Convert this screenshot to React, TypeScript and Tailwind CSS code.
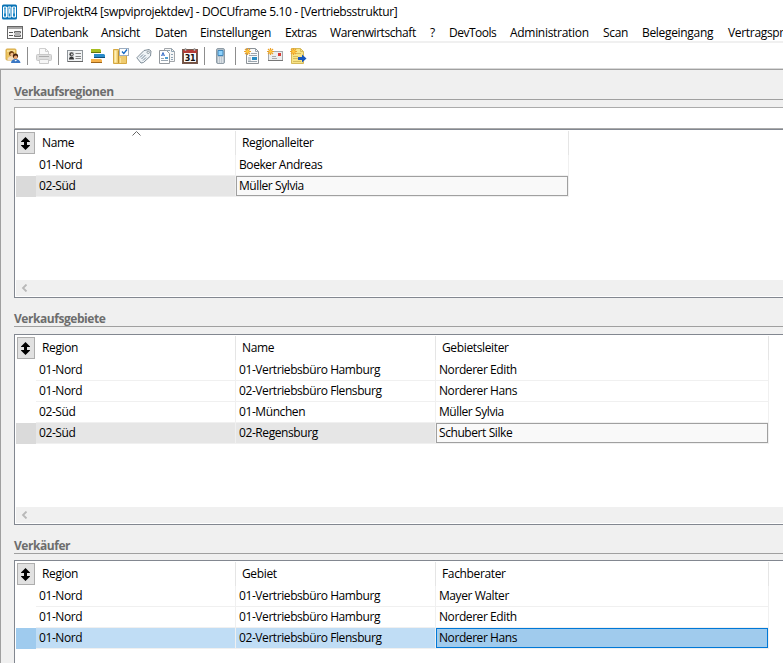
import React from "react";

interface Column {
  title: string;
  className: string;
  sorted?: boolean;
}

interface GridProps {
  columns: Column[];
  rows: string[][];
  active?: boolean;
  className: string;
  scrollbar?: boolean;
}

const menuItems = [
  { label: "Datenbank", className: "w-[71px] tracking-[-0.4px]" },
  { label: "Ansicht", className: "w-[54px] tracking-[-0.3px]" },
  { label: "Daten", className: "w-[45px] tracking-[-0.32px]" },
  { label: "Einstellungen", className: "w-[85px] tracking-[-0.32px]" },
  { label: "Extras", className: "w-[45px] tracking-[-0.5px]" },
  { label: "Warenwirtschaft", className: "w-[100px] tracking-[-0.42px]" },
  { label: "?", className: "w-[19px]" },
  { label: "DevTools", className: "w-[61px] tracking-[-0.5px]" },
  { label: "Administration", className: "w-[93px] tracking-[-0.3px]" },
  { label: "Scan", className: "w-[39px] tracking-[-0.32px]" },
  { label: "Belegeingang", className: "w-[86px] tracking-[-0.32px]" },
  { label: "Vertragsprüfung", className: "w-[100px] tracking-[-0.32px]" },
];

function AppIcon() {
  return (
    <svg className="h-4 w-[15px] shrink-0" viewBox="0 0 15 16">
      <rect width="15" height="15" y="0.5" rx="1.5" fill="#0873b6" />
      <path d="M1.500 3h3v10h-3zM6 3h3v10H6zM10.500 3h3v10h-3z" fill="#1b86c6" stroke="#fff" />
      <path d="M3 4.500v5M7.500 4.500v5M12 4.500v5" stroke="#d5edfb" />
    </svg>
  );
}

function FormIcon() {
  return (
    <svg className="h-[14px] w-4 shrink-0" viewBox="0 0 16 14">
      <rect x="0.5" y="0.5" width="15" height="12" fill="#fbfbfb" stroke="#666" />
      <path d="M1 2h14" stroke="#a5a5a5" strokeWidth="2" />
      <path d="M2 6.500h4M2 9.500h4" stroke="#555" />
      <path d="M7.500 5.500h6v1.500h-6zM7.500 9h6v1.500h-6z" fill="#fff" stroke="#666" />
    </svg>
  );
}

function UsersIcon() {
  return (
    <svg className="h-4 w-4" viewBox="0 0 16 16">
      <rect x="1" y="1" width="10" height="11" rx="1" fill="#ecc463" stroke="#d6a945" />
      <path d="M2 2h8v2H2z" fill="#f8df96" />
      <path d="M2.500 12c0-5 7-5 8 0z" fill="#f2dcc0" />
      <circle cx="6.500" cy="5.500" r="2.500" fill="#70400f" />
      <circle cx="7" cy="6.500" r="1.700" fill="#efb98c" />
      <path d="M6 15c0-5.500 9-5.500 9.500 0z" fill="#3b78c4" />
      <circle cx="10.500" cy="8" r="2.600" fill="#46230f" />
      <circle cx="10.700" cy="9.300" r="1.800" fill="#e9a878" />
      <path d="M9.500 12l1.200 1.500L12 12z" fill="#fff" />
    </svg>
  );
}

function PrinterIcon() {
  return (
    <svg className="h-4 w-4" viewBox="0 0 16 16">
      <path d="M3.500 7V.5h6l3 3V7z" fill="#f9f9f9" stroke="#cfcfcf" />
      <path d="M9.500.5v3h3" fill="none" stroke="#cfcfcf" />
      <rect x="0.5" y="6.500" width="15" height="6" rx="1" fill="#dedede" stroke="#c8c8c8" />
      <path d="M3 8.500h10" stroke="#ababab" />
      <path d="M3.500 11.500h9v4h-9z" fill="#f6f6f6" stroke="#cacaca" />
    </svg>
  );
}

function AddressIcon() {
  return (
    <svg className="h-4 w-4" viewBox="0 0 16 16">
      <rect x="0.5" y="2.500" width="15" height="11" fill="#f1f3f4" stroke="#8e9499" />
      <path d="M1 13.500h15" stroke="#666" />
      <path d="M2 4h5v7H2z" fill="#d3d6d8" />
      <circle cx="4.500" cy="6.200" r="2" fill="#444" />
      <circle cx="4.900" cy="6.500" r="0.900" fill="#ddd" />
      <path d="M2 11.500c0-4 5-4 5 0z" fill="#333" />
      <path d="M8.500 5.500H14M8.500 8.500H14M8.500 10.500H14" stroke="#858585" />
    </svg>
  );
}

function BarsIcon() {
  return (
    <svg className="h-4 w-4" viewBox="0 0 16 16">
      <path d="M1 1h9l1 1v2H1z" fill="#a6bd20" />
      <path d="M1 4.500h10" stroke="#65760f" />
      <path d="M4 6h10l1 1v2H4z" fill="#2a8ccb" />
      <path d="M4 9.500h11" stroke="#104d79" />
      <path d="M1 11h10l1 1v2H1z" fill="#f6b24c" />
      <path d="M1 14.500h11" stroke="#a0651a" />
    </svg>
  );
}

function FolderTaskIcon() {
  return (
    <svg className="h-4 w-4" viewBox="0 0 16 16">
      <path d="M.5 1.500h5V3h8v12.500H.5z" fill="#efcb6e" stroke="#d5a842" />
      <path d="M2.500 2.500v12" stroke="#fff0b5" strokeWidth="2" />
      <path d="M5.500 3v12" stroke="#c0922f" />
      <path d="M7.500 10v5" stroke="#fae29a" />
      <rect x="6.500" y="0.5" width="9" height="7" fill="#fff" stroke="#9dadbf" />
      <path d="M9 3.500l1.800 2L14 1.500" fill="none" stroke="#1268c4" strokeWidth="1.300" />
    </svg>
  );
}

function TagIcon() {
  return (
    <svg className="h-4 w-4" viewBox="0 0 16 16">
      <path d="M.800 9.800L8 2.500l5-1 2 1.500-.5 5L7.500 14.500 5 15z" fill="#eef3f6" stroke="#7f8d98" />
      <circle cx="12.200" cy="4.300" r="1.200" fill="#fff" stroke="#8b989f" />
      <path d="M4 9.500l3-3M5.500 11l4-4M7 12.500l3-3" stroke="#75889a" />
    </svg>
  );
}

function DocumentsIcon() {
  return (
    <svg className="h-4 w-4" viewBox="0 0 16 16">
      <path d="M5.500.5h7l3 3v10h-10z" fill="#f5f6f7" stroke="#a2a6aa" />
      <path d="M12.500.5v3h3M7 2.500h4M12 6.500h2M12 9.500h2M12 11.500h2" fill="none" stroke="#8ea4b4" />
      <path d="M.5 2.500h7l3 3v10H.5z" fill="#fff" stroke="#94999e" />
      <path d="M2.500 8l1.500-3.500L5.500 8M3 7h2" fill="none" stroke="#3c70c8" />
      <path d="M2 10.500h3M2 12.500h7" stroke="#9aa7b2" />
      <path d="M6 9h3v2H6z" fill="#4f9fd2" />
    </svg>
  );
}

function CalendarIcon() {
  return (
    <svg className="h-4 w-4" viewBox="0 0 16 16">
      <rect x="0.500" y="1.500" width="15" height="14" fill="#76513f" stroke="#765a50" />
      <path d="M1 2h14v3H1z" fill="#b33c37" />
      <path d="M2 5h12v9H2z" fill="#fafafa" />
      <path d="M3.500 0v3M12.500 0v3" stroke="#aaa" strokeWidth="1.500" />
      <text x="8" y="13" textAnchor="middle" fontFamily="DejaVu Sans" fontSize="8" fontWeight="bold" letterSpacing="-0.300" fill="#111">31</text>
    </svg>
  );
}

function PhoneIcon() {
  return (
    <svg className="h-4 w-4" viewBox="0 0 16 16">
      <rect x="3.500" y="0.500" width="8" height="15" rx="1.500" fill="#b3bfc8" stroke="#8f9ca6" />
      <path d="M5 2.500h5v5H5z" fill="#8ed2fc" stroke="#3f86bb" />
      <path d="M5 10h1.300M7 10h1.300M9 10h1.300M5 12h1.300M7 12h1.300M9 12h1.300M5 14h1.300M7 14h1.300M9 14h1.300" stroke="#fff" />
    </svg>
  );
}

function Spark() {
  return (
    <>
      <path d="M3.500 0v7M0 3.500h7M1 1l5 5M6 1L1 6" stroke="#eba32b" strokeWidth="1.200" />
      <circle cx="3.500" cy="3.500" r="1.500" fill="#ffc83d" />
    </>
  );
}

function NewDocumentIcon() {
  return (
    <svg className="h-4 w-4" viewBox="0 0 16 16">
      <path d="M2.500.500h9l3 3v12h-12z" fill="#f9fafb" stroke="#8c9297" />
      <path d="M11.500.500v3h3M7 5.500h6M5 7.500h8M4 13.500h9" fill="none" stroke="#9aa5ae" />
      <path d="M4 10h3M4 12h3" stroke="#9aa5ae" />
      <path d="M8 10.500h5" stroke="#278bc3" strokeWidth="3" />
      <Spark />
    </svg>
  );
}

function NewMailIcon() {
  return (
    <svg className="h-4 w-4" viewBox="0 0 16 16">
      <rect x="1.500" y="3.500" width="14" height="9" fill="#eceeee" stroke="#a5a9ac" />
      <path d="M1 12.500h15" stroke="#777" />
      <path d="M11 5h3v3h-3z" fill="#d93a34" />
      <path d="M5 8.500h4M5 10.500h5" stroke="#aaa" />
      <Spark />
    </svg>
  );
}

function NewExportIcon() {
  return (
    <svg className="h-4 w-[17px]" viewBox="0 0 17 16">
      <path d="M1.500.500h9l3 3v12h-12z" fill="#f8e487" stroke="#d6b95a" />
      <path d="M10.500.500v3h3M6 5.500h5M3 8.500h5M3 10.500h5M3 13.500h8" fill="none" stroke="#d6bc5e" />
      <path d="M8 9h4V6.500l4.500 4-4.500 4V12H8z" fill="#1757bd" />
      <Spark />
    </svg>
  );
}

function Divider() {
  return <span className="mr-[8px] ml-[6px] h-[18px] w-px shrink-0 bg-[#8d8d8d]" />;
}

function Toolbar() {
  return (
    <div className="flex h-[25px] items-center bg-white pl-[5px]">
      <UsersIcon />
      <Divider />
      <PrinterIcon />
      <Divider />
      <div className="flex gap-[7px]">
        <AddressIcon />
        <BarsIcon />
        <FolderTaskIcon />
        <TagIcon />
        <DocumentsIcon />
        <CalendarIcon />
      </div>
      <Divider />
      <PhoneIcon />
      <Divider />
      <div className="flex gap-[7px]">
        <NewDocumentIcon />
        <NewMailIcon />
        <NewExportIcon />
      </div>
    </div>
  );
}

function SortButton() {
  return (
    <button
      type="button"
      className="mt-[2px] ml-[2px] flex h-[22px] w-[18px] shrink-0 items-center justify-center border border-[#adadad] bg-[#e1e1e1] pt-px pr-px"
    >
      <svg className="h-[13px] w-[9px]" viewBox="0 0 9 13">
        <path d="M4.500 0L9 4.500V5H6v3h3v.5L4.500 13 0 8.500V8h3V5H0v-.5z" fill="#000" />
      </svg>
    </button>
  );
}

function Grid({ columns, rows, active = false, className, scrollbar = true }: GridProps) {
  const last = columns.length - 1;
  const rowColor = active ? "bg-[#c0ddf5]" : "bg-[#e6e6e6]";
  const handleColor = active ? "bg-[#9fcbee]" : "bg-[#dadada]";
  const cellColor = active
    ? "border-[#0078d7] bg-[#a0cbed]"
    : "border-[#a0a0a0] bg-[#f9f9f9]";

  return (
    <div className={`flex flex-col border border-r-0 border-[#828790] bg-white ${className}`}>
      <div className="flex h-[25px] shrink-0">
        <SortButton />
        <div className="ml-px flex">
          {columns.map((column) => (
            <div
              key={column.title}
              className={`relative mt-px flex items-center border-r border-[#e5e5e5] pl-[6px] tracking-[-0.36px] ${column.className}`}
            >
              {column.title}
              {column.sorted && (
                <svg className="absolute top-0 left-[96px] h-[5px] w-[9px]" viewBox="0 0 9 5">
                  <path d="M.5 4.500l4-4 4 4" fill="none" stroke="#666" />
                </svg>
              )}
            </div>
          ))}
        </div>
      </div>
      {rows.map((row, rowIndex) => {
        const selected = rowIndex === rows.length - 1;
        return (
          <div key={rowIndex} className="flex h-[21px] shrink-0 pl-px">
            <div className={`w-5 shrink-0 ${selected ? handleColor : ""}`} />
            {row.map((value, index) => (
              <div
                key={index}
                className={`shrink-0 border-r border-b border-[#f0f0f0] ${columns[index].className} ${
                  selected && index !== last ? rowColor : ""
                }`}
              >
                <div
                  className={`flex h-5 items-center ${
                    selected && index === last ? `border pl-[2px] ${cellColor}` : "pl-[3px]"
                  }`}
                >
                  {value}
                </div>
              </div>
            ))}
          </div>
        );
      })}
      {scrollbar && (
        <div className="mt-auto mb-px ml-px flex h-4 shrink-0 items-center bg-[#f0f0f0] pb-px pl-[5px]">
          <svg className="h-[8px] w-[7px]" viewBox="0 0 7 8">
            <path d="M5.500 .5L2 4l3.500 3.500" fill="none" stroke="#b8b8b8" strokeWidth="1.800" />
          </svg>
        </div>
      )}
    </div>
  );
}

function SectionTitle({ children, className }: { children: React.ReactNode; className: string }) {
  return (
    <h2
      className={`flex h-[17px] shrink-0 items-center border-b border-[#a0a0a0] pt-[2px] font-bold tracking-[-0.45px] text-[#6d6d6d] ${className}`}
    >
      {children}
    </h2>
  );
}

export default function App() {
  return (
    <div className="flex h-[663px] w-[783px] flex-col overflow-hidden bg-[#f0f0f0] font-['Open_Sans',sans-serif] text-[12px] leading-none tracking-[-0.42px] whitespace-nowrap text-black">
      <header className="shrink-0 bg-white">
        <div className="flex h-[23px] items-center pl-[2px]">
          <AppIcon />
          <span className="ml-[6px] tracking-[-0.365px]">
            DFViProjektR4 [swpviprojektdev] - DOCUframe 5.10 - [Vertriebsstruktur]
          </span>
        </div>
        <nav className="flex h-[18px] items-center pt-[2px] pl-[7px]">
          <FormIcon />
          <div className="ml-[7px] flex">
            {menuItems.map((item) => (
              <span key={item.label} className={`shrink-0 ${item.className}`}>
                {item.label}
              </span>
            ))}
          </div>
        </nav>
        <div className="h-[2px] bg-[#f0f0f0]" />
        <Toolbar />
        <div className="h-px bg-[#d8d8d8]" />
      </header>
      <main className="flex flex-1 flex-col border-t border-l border-[#a0a0a0] pl-[13px]">
        <SectionTitle className="mt-[13px]">Verkaufsregionen</SectionTitle>
        <input className="mt-[7px] h-[22px] shrink-0 border border-r-0 border-[#ababab] bg-white outline-none" />
        <Grid
          className="h-[169px] shrink-0"
          columns={[
            { title: "Name", className: "w-[200px]", sorted: true },
            { title: "Regionalleiter", className: "w-[333px]" },
          ]}
          rows={[
            ["01-Nord", "Boeker Andreas"],
            ["02-Süd", "Müller Sylvia"],
          ]}
        />
        <SectionTitle className="mt-[12px]">Verkaufsgebiete</SectionTitle>
        <Grid
          className="mt-[7px] h-[191px] shrink-0"
          columns={[
            { title: "Region", className: "w-[200px]" },
            { title: "Name", className: "w-[200px]" },
            { title: "Gebietsleiter", className: "w-[333px]" },
          ]}
          rows={[
            ["01-Nord", "01-Vertriebsbüro Hamburg", "Norderer Edith"],
            ["01-Nord", "02-Vertriebsbüro Flensburg", "Norderer Hans"],
            ["02-Süd", "01-München", "Müller Sylvia"],
            ["02-Süd", "02-Regensburg", "Schubert Silke"],
          ]}
        />
        <SectionTitle className="mt-[12px]">Verkäufer</SectionTitle>
        <Grid
          className="mt-[6px] h-[110px] shrink-0 border-b-0"
          scrollbar={false}
          active
          columns={[
            { title: "Region", className: "w-[200px]" },
            { title: "Gebiet", className: "w-[200px]" },
            { title: "Fachberater", className: "w-[333px]" },
          ]}
          rows={[
            ["01-Nord", "01-Vertriebsbüro Hamburg", "Mayer Walter"],
            ["01-Nord", "01-Vertriebsbüro Hamburg", "Norderer Edith"],
            ["01-Nord", "02-Vertriebsbüro Flensburg", "Norderer Hans"],
          ]}
        />
      </main>
    </div>
  );
}
